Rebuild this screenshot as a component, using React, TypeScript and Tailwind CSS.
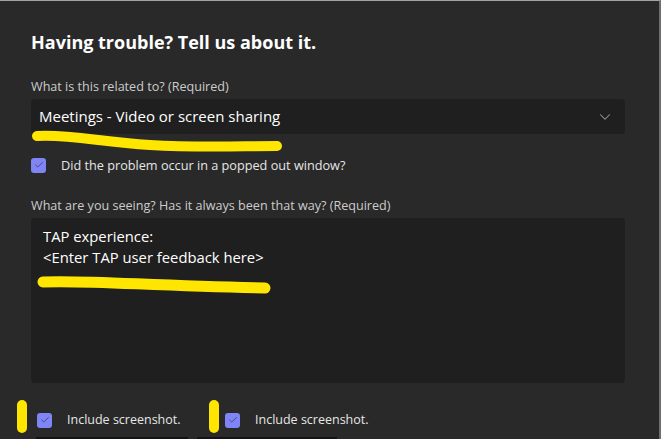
import { ChevronDown, Check } from 'lucide-react';

function Checkbox() {
    return (
        <span className="flex h-[15px] w-[15px] shrink-0 items-center justify-center rounded-[3px] bg-[#7f85f5]">
            <Check className="h-[10px] w-[10px] text-[#3f3f7a]" strokeWidth={2} />
        </span>
    );
}

export default function App() {
    return (
        <div
            className="relative flex h-[439px] w-[661px] flex-col overflow-hidden border-t border-r-2 border-t-[#a3a3a3] border-r-[#6e6e6e] bg-[#292929] pl-[31px] pr-[34px] text-white"
            style={{ fontFamily: '"Open Sans", "Noto Sans", sans-serif' }}
        >
            {/* Header */}
            <h1 className="mt-[29px] text-[18px] font-bold leading-[24px] text-white">
                Having trouble? Tell us about it.
            </h1>

            {/* Category */}
            <label className="mt-[25px] text-[12.6px] leading-[16px] text-[#cccccc]">
                What is this related to? (Required)
            </label>
            <div className="mt-[4px] flex h-[35px] items-center justify-between rounded-[4px] bg-[#1f1f1f] pl-[8px] pr-[10px]">
                <span className="text-[15px] text-white">Meetings - Video or screen sharing</span>
                <ChevronDown className="h-[18px] w-[20px] text-[#9a9a9a]" strokeWidth={1.4} />
            </div>

            <div className="mt-[23px] flex items-center gap-[15px]">
                <Checkbox />
                <span className="text-[12.7px] leading-[16px] text-[#e6e6e6]">
                    Did the problem occur in a popped out window?
                </span>
            </div>

            {/* Description */}
            <label className="mt-[25px] text-[12.6px] leading-[16px] text-[#cccccc]">
                What are you seeing? Has it always been that way? (Required)
            </label>
            <div className="mt-[4px] h-[165px] rounded-[4px] bg-[#1f1f1f] px-[12px] pt-[8px] text-[14.8px] leading-[21px] text-white">
                <div>TAP experience:</div>
                <div>&lt;Enter TAP user feedback here&gt;</div>
            </div>

            {/* Screenshot toggles */}
            <div className="mt-[29px] flex items-center pl-[6px]">
                <div className="flex w-[188px] items-center gap-[15px]">
                    <Checkbox />
                    <span className="text-[12.5px] leading-[16px] text-[#e6e6e6]">Include screenshot.</span>
                </div>
                <div className="flex items-center gap-[15px]">
                    <Checkbox />
                    <span className="text-[12.5px] leading-[16px] text-[#e6e6e6]">Include screenshot.</span>
                </div>
            </div>

            {/* Thumbnails peeking at the bottom */}
            <div className="mt-auto flex gap-[9px] pl-[5px]">
                <div className="h-[2px] w-[152px] bg-[#141414]" />
                <div className="h-[2px] w-[140px] bg-[#141414]" />
            </div>

            {/* Yellow highlighter marks */}
            <svg className="pointer-events-none absolute left-0 top-0" width="661" height="439">
                <path
                    d="M37 135 C 70 133, 100 141, 150 144 S 240 145, 277 145"
                    stroke="#ffe600"
                    strokeWidth="10"
                    strokeLinecap="round"
                    fill="none"
                />
                <path
                    d="M43 281 C 90 279, 150 285, 265 287"
                    stroke="#ffe600"
                    strokeWidth="11"
                    strokeLinecap="round"
                    fill="none"
                />
                <line x1="22" y1="404" x2="22" y2="427" stroke="#ffe600" strokeWidth="10" strokeLinecap="round" />
                <line x1="214" y1="404" x2="214" y2="427" stroke="#ffe600" strokeWidth="10" strokeLinecap="round" />
            </svg>
        </div>
    );
}
